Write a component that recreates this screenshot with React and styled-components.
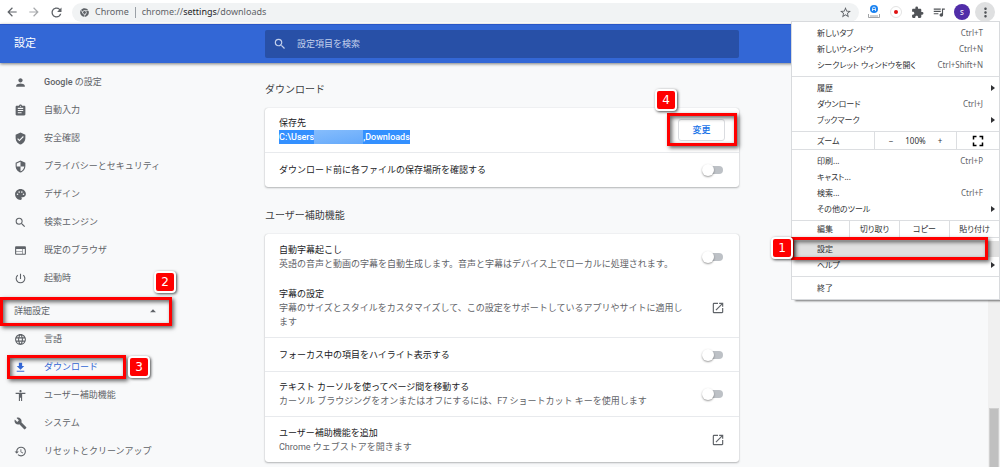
import React from "react";
import styled, { createGlobalStyle } from "styled-components";
import {
    MdAccessibility,
    MdArrowBack,
    MdArrowDropUp,
    MdArrowForward,
    MdAssignment,
    MdBuild,
    MdExtension,
    MdFileDownload,
    MdFullscreen,
    MdHistory,
    MdLanguage,
    MdMoreVert,
    MdOpenInNew,
    MdPalette,
    MdPerson,
    MdPowerSettingsNew,
    MdQueueMusic,
    MdRefresh,
    MdSearch,
    MdSecurity,
    MdStarBorder,
    MdVerifiedUser,
    MdWeb,
} from "react-icons/md";
import { FaChrome } from "react-icons/fa";

const basicItems = [
    { icon: MdPerson, label: "Google の設定" },
    { icon: MdAssignment, label: "自動入力" },
    { icon: MdVerifiedUser, label: "安全確認" },
    { icon: MdSecurity, label: "プライバシーとセキュリティ" },
    { icon: MdPalette, label: "デザイン" },
    { icon: MdSearch, label: "検索エンジン" },
    { icon: MdWeb, label: "既定のブラウザ" },
    { icon: MdPowerSettingsNew, label: "起動時" },
];

const advancedItems = [
    { icon: MdLanguage, label: "言語" },
    { icon: MdFileDownload, label: "ダウンロード", active: true },
    { icon: MdAccessibility, label: "ユーザー補助機能" },
    { icon: MdBuild, label: "システム" },
    { icon: MdHistory, label: "リセットとクリーンアップ" },
];

function NavItem({ item }) {
    const Icon = item.icon;

    return (
        <NavLink href="#" $active={item.active}>
            <Icon size={13} />
            <span>{item.label.startsWith("Google") ? <><b>Google</b> の設定</> : item.label}</span>
            {item.active && (
                <>
                    <Frame $top={2} $left={7} $width={119} $height={24} />
                    <Badge $top={3} $left={128}>3</Badge>
                </>
            )}
        </NavLink>
    );
}

function ToggleRow({ id, title, desc, last, plain }) {
    return (
        <Row $last={last} $plain={plain} $tall={!!desc}>
            <RowText as="label" htmlFor={id}>
                <RowTitle>{title}</RowTitle>
                {desc && <RowDesc>{desc}</RowDesc>}
            </RowText>
            <Switch id={id} type="checkbox" role="switch" />
        </Row>
    );
}

function LinkRow({ title, desc, last }) {
    return (
        <Row $last={last} $tall>
            <RowText>
                <RowTitle>{title}</RowTitle>
                <RowDesc>{desc}</RowDesc>
            </RowText>
            <IconButton type="button" aria-label={title}>
                <MdOpenInNew size={14} />
            </IconButton>
        </Row>
    );
}

function MenuItem({ label, shortcut, sub, active, children }) {
    return (
        <MenuRow type="button" $active={active}>
            <span>{label}</span>
            {shortcut && <Shortcut>{shortcut}</Shortcut>}
            {sub && <SubArrow />}
            {children}
        </MenuRow>
    );
}

function App() {
    return (
        <Page>
            <GlobalStyle />
            <Toolbar>
                <IconButton type="button" aria-label="戻る"><MdArrowBack size={14} /></IconButton>
                <IconButton type="button" aria-label="進む" $faded><MdArrowForward size={14} /></IconButton>
                <IconButton type="button" aria-label="再読み込み"><MdRefresh size={15} /></IconButton>
                <Omnibox>
                    <FaChrome size={9} />
                    <span>Chrome</span>
                    <Divider />
                    <Url>chrome://<em>settings</em>/downloads</Url>
                    <IconButton type="button" aria-label="ブックマーク"><MdStarBorder size={13} /></IconButton>
                </Omnibox>
                <Extensions>
                    <svg width="14" height="14" viewBox="0 0 14 14">
                        <circle cx="7" cy="4" r="4" fill="#1a82f0" />
                        <path d="M5.5 6V3.5a1.5 1.5 0 0 1 3 0V6M5.5 4.5h3" fill="none" stroke="#fff" strokeWidth=".8" />
                        <path d="M1.5 9v3.500h11V9M4 10v2M6 10v2M8 10v2M10 10v2" fill="none" stroke="#8a8d91" strokeWidth=".8" />
                    </svg>
                    <svg width="14" height="14" viewBox="0 0 14 14">
                        <circle cx="7" cy="7" r="5.500" fill="#fff" stroke="#dcdcdc" strokeWidth=".8" />
                        <circle cx="7" cy="7" r="2" fill="#e01010" />
                    </svg>
                    <MdExtension size={13} />
                    <MdQueueMusic size={14} />
                    <Avatar>s</Avatar>
                    <MoreButton type="button" aria-label="メニュー"><MdMoreVert size={15} /></MoreButton>
                </Extensions>
            </Toolbar>

            <Header>
                <h1>設定</h1>
                <SearchBox>
                    <MdSearch size={14} />
                    <input type="search" aria-label="設定項目を検索" placeholder="設定項目を検索" />
                </SearchBox>
            </Header>

            <Body>
                <Sidebar>
                    {basicItems.map((item) => <NavItem key={item.label} item={item} />)}
                    <Expand type="button">
                        詳細設定
                        <MdArrowDropUp size={14} />
                        <Frame $top={5} $left={0} $width={172} $height={29} />
                        <Badge $top={-21} $left={154}>2</Badge>
                    </Expand>
                    {advancedItems.map((item) => <NavItem key={item.label} item={item} />)}
                </Sidebar>

                <Main>
                    <SectionTitle>ダウンロード</SectionTitle>
                    <Card>
                        <Row $tall>
                            <RowText>
                                <RowTitle>保存先</RowTitle>
                                <Path>C:\Users<Blurred />,Downloads</Path>
                            </RowText>
                            <ChangeWrap>
                                <ChangeButton type="button">変更</ChangeButton>
                                <Frame $top={-6} $left={-11} $width={70} $height={33} />
                                <Badge $top={-30} $left={-23}>4</Badge>
                            </ChangeWrap>
                        </Row>
                        <ToggleRow id="ask" title="ダウンロード前に各ファイルの保存場所を確認する" last />
                    </Card>

                    <SectionTitle>ユーザー補助機能</SectionTitle>
                    <Card>
                        <ToggleRow
                            id="caption"
                            title="自動字幕起こし"
                            desc="英語の音声と動画の字幕を自動生成します。音声と字幕はデバイス上でローカルに処理されます。"
                            plain
                        />
                        <LinkRow
                            title="字幕の設定"
                            desc="字幕のサイズとスタイルをカスタマイズして、この設定をサポートしているアプリやサイトに適用します"
                        />
                        <ToggleRow id="focus" title="フォーカス中の項目をハイライト表示する" />
                        <ToggleRow
                            id="caret"
                            title="テキスト カーソルを使ってページ間を移動する"
                            desc="カーソル ブラウジングをオンまたはオフにするには、F7 ショートカット キーを使用します"
                        />
                        <LinkRow title="ユーザー補助機能を追加" desc="Chrome ウェブストアを開きます" last />
                    </Card>
                </Main>

                <ScrollTrack><ScrollThumb /></ScrollTrack>
            </Body>

            <Menu>
                <MenuGroup>
                    <MenuItem label="新しいタブ" shortcut="Ctrl+T" />
                    <MenuItem label="新しいウィンドウ" shortcut="Ctrl+N" />
                    <MenuItem label="シークレット ウィンドウを開く" shortcut="Ctrl+Shift+N" />
                </MenuGroup>
                <MenuGroup>
                    <MenuItem label="履歴" sub />
                    <MenuItem label="ダウンロード" shortcut="Ctrl+J" />
                    <MenuItem label="ブックマーク" sub />
                </MenuGroup>
                <ZoomRow>
                    <span>ズーム</span>
                    <ZoomControls>
                        <button type="button" aria-label="縮小">−</button>
                        <span>100%</span>
                        <button type="button" aria-label="拡大">+</button>
                    </ZoomControls>
                    <button type="button" aria-label="全画面表示"><MdFullscreen size={18} color="#000" /></button>
                </ZoomRow>
                <MenuGroup>
                    <MenuItem label="印刷..." shortcut="Ctrl+P" />
                    <MenuItem label="キャスト..." />
                    <MenuItem label="検索..." shortcut="Ctrl+F" />
                    <MenuItem label="その他のツール" sub />
                </MenuGroup>
                <EditRow>
                    <span>編集</span>
                    <button type="button">切り取り</button>
                    <button type="button">コピー</button>
                    <button type="button">貼り付け</button>
                </EditRow>
                <MenuGroup>
                    <MenuItem label="設定" active>
                        <Frame $top={-4} $left={-1} $width={197} $height={23} />
                        <Badge $top={-4} $left={-21}>1</Badge>
                    </MenuItem>
                    <MenuItem label="ヘルプ" sub />
                </MenuGroup>
                <MenuGroup>
                    <MenuItem label="終了" />
                </MenuGroup>
            </Menu>
        </Page>
    );
}

export default App;

const GlobalStyle = createGlobalStyle`
    * {
        box-sizing: border-box;
    }
    body {
        margin: 0;
        overflow: hidden;
        background: #f8f9fa;
        font-family: Roboto, "Noto Sans CJK JP", sans-serif;
        font-size: 9px;
        line-height: 14px;
        color: #202124;
    }
    button, input {
        margin: 0;
        padding: 0;
        border: 0;
        background: none;
        font: inherit;
        color: inherit;
    }
    svg {
        display: block;
        flex: none;
    }
`

const Page = styled.div`
    position: relative;
    display: flex;
    flex-direction: column;
    height: 100vh;
`

const Toolbar = styled.div`
    display: flex;
    align-items: center;
    gap: 8px;
    height: 24px;
    padding: 0 5px;
    background: white;
    color: #505357;
    font-family: "Noto Sans", "Noto Sans CJK JP", sans-serif;
`

const IconButton = styled.button`
    display: flex;
    color: #5f6368;
    opacity: ${(props) => (props.$faded ? 0.55 : 1)};
`

const Omnibox = styled.div`
    display: flex;
    flex: 1;
    align-items: center;
    gap: 6px;
    height: 19px;
    padding: 0 7px 0 8px;
    border-radius: 10px;
    background: #f1f3f4;
    color: #5f6368;
`

const Divider = styled.i`
    width: 1px;
    height: 11px;
    background: #9aa0a6;
`

const Url = styled.span`
    flex: 1;
    em {
        font-style: normal;
        color: #202124;
    }
`

const Extensions = styled.div`
    display: flex;
    align-items: center;
    gap: 8px;
    color: #505357;
`

const Avatar = styled.span`
    width: 16px;
    height: 16px;
    border-radius: 50%;
    background: #512da8;
    color: white;
    font-size: 8px;
    line-height: 15px;
    text-align: center;
`

const MoreButton = styled.button`
    display: flex;
    align-items: center;
    justify-content: center;
    width: 20px;
    height: 20px;
    margin-left: -3px;
    border-radius: 50%;
    background: #dfe0e1;
`

const Header = styled.header`
    position: relative;
    z-index: 1;
    display: grid;
    grid-template-columns: 265px minmax(0, 474px) 1fr;
    align-items: center;
    height: 39px;
    border-top: 1px solid #2a56c6;
    background: #3367d6;
    box-shadow: 0 1px 3px rgba(0, 0, 0, 0.5);
    color: white;
    h1 {
        margin: 0;
        padding-left: 14px;
        font-size: 11px;
        font-weight: 400;
    }
`

const SearchBox = styled.div`
    display: flex;
    align-items: center;
    gap: 10px;
    height: 28px;
    padding: 0 8px;
    border-radius: 2px;
    background: #2850a7;
    color: #c3d0ec;
    input {
        flex: 1;
        outline: none;
    }
    input::placeholder {
        color: #c3d0ec;
    }
`

const Body = styled.div`
    display: grid;
    flex: 1;
    grid-template-columns: 265px minmax(0, 474px) 1fr;
    grid-template-rows: minmax(0, 1fr);
    min-height: 0;
`

const Sidebar = styled.nav`
    padding-top: 5px;
    color: #5f6368;
`

const NavLink = styled.a`
    position: relative;
    display: flex;
    align-items: center;
    gap: 17px;
    height: 28px;
    padding-left: 14px;
    color: ${(props) => (props.$active ? "#3367d6" : "#5f6368")};
    text-decoration: none;
    b {
        font-weight: 500;
    }
`

const Expand = styled.button`
    position: relative;
    display: flex;
    align-items: center;
    justify-content: space-between;
    width: 160px;
    height: 33px;
    padding: 4px 0 0 14px;
`

const Main = styled.main`
    padding-top: 20px;
`

const SectionTitle = styled.h2`
    margin: 0 0 11px;
    font-size: 10px;
    font-weight: 400;
    line-height: 14px;
    color: #3c4043;
`

const Card = styled.section`
    margin-bottom: 22px;
    border-radius: 3px;
    background: white;
    box-shadow: 0 1px 2px rgba(60, 64, 67, 0.35), 0 0 1px rgba(60, 64, 67, 0.3);
`

const Row = styled.div`
    display: flex;
    align-items: center;
    justify-content: space-between;
    min-height: ${(props) => (props.$tall ? "45px" : "34px")};
    padding: 8px 14px;
    border-bottom: ${(props) => (props.$last || props.$plain ? "0" : "1px solid #e8eaed")};
`

const RowText = styled.div`
    width: 408px;
`

const RowTitle = styled.div`
    color: #202124;
`

const RowDesc = styled.div`
    color: #5f6368;
`

const Path = styled.span`
    display: inline-flex;
    background: #3390ff;
    color: white;
    font-weight: 500;
`

const Blurred = styled.i`
    width: 49px;
    height: 14px;
    background: linear-gradient(170deg, #86bdfc, #64a9fb);
`

const Switch = styled.input`
    display: flex;
    align-items: center;
    appearance: none;
    width: 20px;
    height: 8px;
    margin-right: 2px;
    border-radius: 4px;
    background: #bdc1c6;
    &::before {
        content: "";
        width: 12px;
        height: 12px;
        margin-left: -1px;
        flex: none;
        border-radius: 50%;
        background: white;
        box-shadow: 0 1px 2px rgba(0, 0, 0, 0.4);
    }
    &:checked {
        justify-content: flex-end;
        background: #8ab4f8;
    }
`

const ChangeWrap = styled.div`
    position: relative;
`

const ChangeButton = styled.button`
    display: block;
    width: 47px;
    height: 22px;
    border: 1px solid #dadce0;
    border-radius: 3px;
    color: #1a73e8;
    font-weight: 500;
`

const ScrollTrack = styled.div`
    display: flex;
    flex-direction: column;
    justify-content: flex-end;
    justify-self: end;
    width: 12px;
    padding: 0 1px;
    background: #f0f0f0;
`

const ScrollThumb = styled.div`
    height: 59px;
    border: 1px solid #d0d0d0;
    border-bottom: 0;
    background: #c0c0c0;
`

const Menu = styled.div`
    position: absolute;
    z-index: 2;
    top: 21px;
    right: 0;
    width: 209px;
    border: 1px solid #d8dadd;
    background: white;
    box-shadow: 3px 2px 2px -1px rgba(0, 0, 0, 0.55);
    font-family: "Noto Sans", "Noto Sans CJK JP", sans-serif;
    font-size: 8px;
    font-feature-settings: "palt";
    line-height: 16px;
    color: #303134;
`

const MenuGroup = styled.div`
    padding: 3px 0;
    & + & {
        border-top: 1px solid #dcdee1;
    }
`

const MenuRow = styled.button`
    position: relative;
    display: flex;
    align-items: center;
    justify-content: space-between;
    width: 100%;
    height: 16px;
    padding: 0 4px 0 25px;
    background: ${(props) => (props.$active ? "#e0e0e0" : "none")};
    white-space: nowrap;
`

const Shortcut = styled.span`
    padding-right: 12px;
    color: #5f6368;
`

const SubArrow = styled.i`
    border: 3px solid transparent;
    border-right: 0;
    border-left: 4px solid #303134;
`

const ZoomRow = styled.div`
    display: grid;
    grid-template-columns: 82px 82px 1fr;
    border: solid #dcdee1;
    border-width: 1px 0;
    > * {
        display: flex;
        align-items: center;
        justify-content: center;
        height: 17px;
    }
    > * + * {
        border-left: 1px solid #dcdee1;
    }
    > :first-child {
        justify-content: flex-start;
        padding-left: 25px;
    }
`

const ZoomControls = styled.div`
    gap: 12px;
`

const EditRow = styled.div`
    display: grid;
    grid-template-columns: 57px 50px 50px 1fr;
    border: solid #dcdee1;
    border-width: 1px 0;
    > * {
        height: 16px;
        text-align: center;
    }
    > * + * {
        border-left: 1px solid #dcdee1;
    }
    > :first-child {
        padding-left: 25px;
        text-align: left;
    }
`

const Frame = styled.i`
    position: absolute;
    top: ${(props) => props.$top}px;
    left: ${(props) => props.$left}px;
    z-index: 3;
    width: ${(props) => props.$width}px;
    height: ${(props) => props.$height}px;
    border: 3px solid #f00;
    box-shadow: 2px 2px 4px rgba(0, 0, 0, 0.6), inset 2px 2px 4px rgba(0, 0, 0, 0.6);
    pointer-events: none;
`

const Badge = styled.span`
    position: absolute;
    top: ${(props) => props.$top}px;
    left: ${(props) => props.$left}px;
    z-index: 4;
    width: 22px;
    height: 22px;
    border: 2px solid white;
    border-radius: 4px;
    background: #f00;
    box-shadow: 1px 1px 3px rgba(0, 0, 0, 0.7);
    color: white;
    font-family: "DejaVu Sans", sans-serif;
    font-size: 12px;
    font-weight: 400;
    line-height: 18px;
    text-align: center;
`
